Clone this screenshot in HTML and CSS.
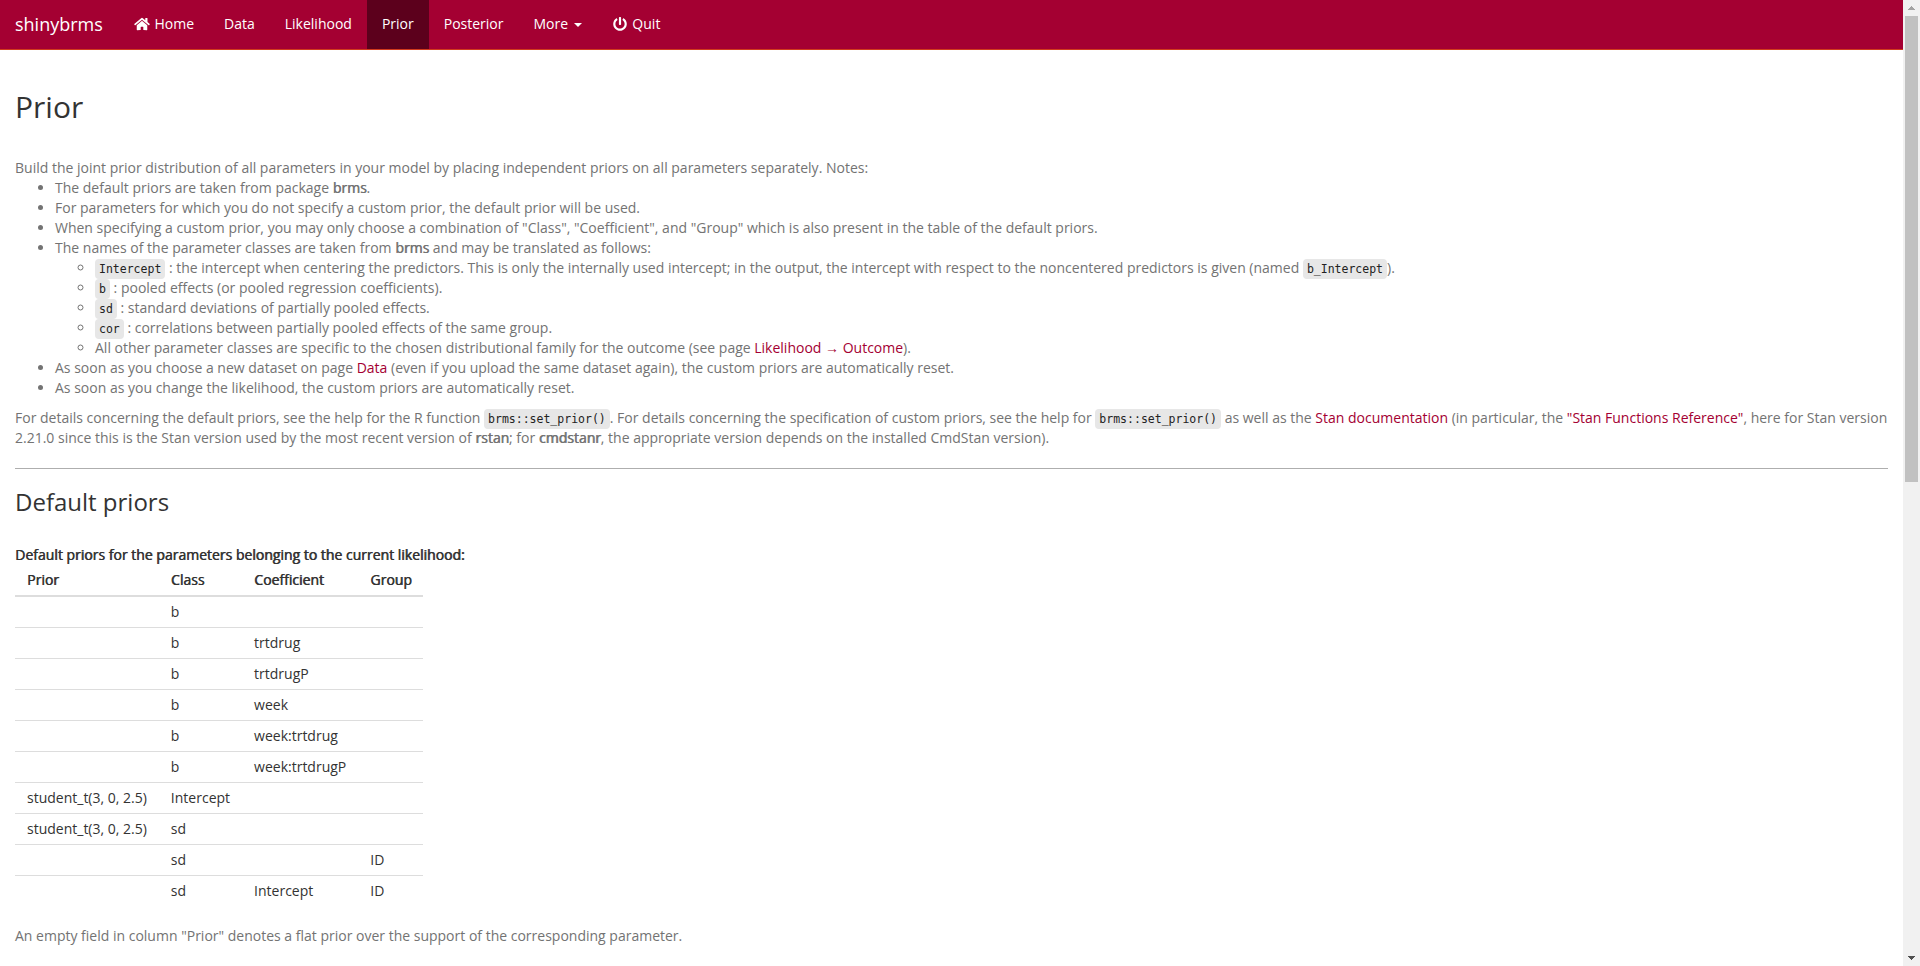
FILE: index.html
```
<!DOCTYPE html>
<html lang="en">
<head>
<meta charset="utf-8">
<title>shinybrms</title>
<link rel="stylesheet" href="styles.css">
</head>
<body>
<div class="page">
  <nav class="navbar">
    <a class="brand">shinybrms</a>
    <a class="nav-item"><svg class="icon icon-home" viewBox="0 0 576 512"><path d="M280.37 148.26L96 300.11V464a16 16 0 0 0 16 16l112.06-.29a16 16 0 0 0 15.92-16V368a16 16 0 0 1 16-16h64a16 16 0 0 1 16 16v95.64a16 16 0 0 0 16 16.05L464 480a16 16 0 0 0 16-16V300L295.67 148.26a12.19 12.19 0 0 0-15.3 0zM571.6 251.47L488 182.56V44.05a12 12 0 0 0-12-12h-56a12 12 0 0 0-12 12v72.61L318.47 43a48 48 0 0 0-61 0L4.34 251.47a12 12 0 0 0-1.6 16.9l25.5 31A12 12 0 0 0 45.15 301l235.22-193.74a12.19 12.19 0 0 1 15.3 0L530.9 301a12 12 0 0 0 16.9-1.6l25.5-31a12 12 0 0 0-1.7-16.93z"/></svg> Home</a>
    <a class="nav-item">Data</a>
    <a class="nav-item">Likelihood</a>
    <a class="nav-item active">Prior</a>
    <a class="nav-item">Posterior</a>
    <a class="nav-item">More <span class="caret"></span></a>
    <a class="nav-item"><svg class="icon icon-power" viewBox="0 0 512 512"><path d="M400 54.1c63 45 104 118.600 104 201.900 0 136.800-110.800 247.700-247.500 248C120 504.300 8.200 393 8 256.400 7.900 173.100 48.900 99.300 111.800 54.200c11.700-8.300 28-4.800 35 7.700L162.600 90c5.900 10.500 3.100 23.800-6.600 31-41.500 30.800-68 79.600-68 134.900-.1 92.300 74.500 168.100 168 168.100 91.600 0 168.600-74.200 168-169.100-.3-51.800-24.700-101.800-68.100-134-9.700-7.200-12.400-20.500-6.500-30.900l15.800-28.100c7-12.400 23.200-16.100 34.800-7.800zM296 264V24c0-13.300-10.700-24-24-24h-32c-13.300 0-24 10.700-24 24v240c0 13.300 10.700 24 24 24h32c13.300 0 24-10.700 24-24z"/></svg> Quit</a>
  </nav>
  <main class="content">
    <h1 class="title">Prior</h1>
    <div class="help">
      Build the joint prior distribution of all parameters in your model by placing independent priors on all parameters separately. Notes:
      <ul class="notes">
        <li>The default priors are taken from package <b>brms</b>.</li>
        <li>For parameters for which you do not specify a custom prior, the default prior will be used.</li>
        <li>When specifying a custom prior, you may only choose a combination of "Class", "Coefficient", and "Group" which is also present in the table of the default priors.</li>
        <li>The names of the parameter classes are taken from <b>brms</b> and may be translated as follows:
          <ul class="classes">
            <li><code>Intercept</code> : the intercept when centering the predictors. This is only the internally used intercept; in the output, the intercept with respect to the noncentered predictors is given (named <code>b_Intercept</code>).</li>
            <li><code>b</code> : pooled effects (or pooled regression coefficients).</li>
            <li><code>sd</code> : standard deviations of partially pooled effects.</li>
            <li><code>cor</code> : correlations between partially pooled effects of the same group.</li>
            <li>All other parameter classes are specific to the chosen distributional family for the outcome (see page <a class="link">Likelihood <span class="arrow">→</span> Outcome</a>).</li>
          </ul>
        </li>
        <li>As soon as you choose a new dataset on page <a class="link">Data</a> (even if you upload the same dataset again), the custom priors are automatically reset.</li>
        <li>As soon as you change the likelihood, the custom priors are automatically reset.</li>
      </ul>
      <p class="details">For details concerning the default priors, see the help for the R function <code>brms::set_prior()</code>. For details concerning the specification of custom priors, see the help for <code>brms::set_prior()</code> as well as the <a class="link">Stan documentation</a> (in particular, the <a class="link">"Stan Functions Reference"</a>, here for Stan version 2.21.0 since this is the Stan version used by the most recent version of <b>rstan</b>; for <b>cmdstanr</b>, the appropriate version depends on the installed CmdStan version).</p>
    </div>
    <hr class="rule">
    <h2 class="subtitle">Default priors</h2>
    <div class="table-label">Default priors for the parameters belonging to the current likelihood:</div>
    <table class="priors">
      <thead><tr><th>Prior</th><th>Class</th><th>Coefficient</th><th>Group</th></tr></thead>
      <tbody>
        <tr><td></td><td>b</td><td></td><td></td></tr>
        <tr><td></td><td>b</td><td>trtdrug</td><td></td></tr>
        <tr><td></td><td>b</td><td>trtdrugP</td><td></td></tr>
        <tr><td></td><td>b</td><td>week</td><td></td></tr>
        <tr><td></td><td>b</td><td>week:trtdrug</td><td></td></tr>
        <tr><td></td><td>b</td><td>week:trtdrugP</td><td></td></tr>
        <tr><td>student_t(3, 0, 2.5)</td><td>Intercept</td><td></td><td></td></tr>
        <tr><td>student_t(3, 0, 2.5)</td><td>sd</td><td></td><td></td></tr>
        <tr><td></td><td>sd</td><td></td><td>ID</td></tr>
        <tr><td></td><td>sd</td><td>Intercept</td><td>ID</td></tr>
      </tbody>
    </table>
    <p class="footnote">An empty field in column "Prior" denotes a flat prior over the support of the corresponding parameter.</p>
  </main>
</div>
<div class="scrollbar">
  <svg class="sb-arrow" viewBox="0 0 17 16"><path d="M8 6h1v1h1v1h1v1h1v1H5V9h1V8h1V7h1z" fill="#a3a3a3"/></svg>
  <div class="sb-thumb"></div>
  <svg class="sb-arrow sb-down" viewBox="0 0 17 16"><path d="M5 6h7v1h-1v1h-1v1H9v1H8V9H7V8H6V7H5z" fill="#505050"/></svg>
</div>
</body>
</html>
```
FILE: styles.css
```
* { box-sizing: border-box; }
body {
  margin: 0;
  height: 966px;
  overflow: hidden;
  display: flex;
  background: #fff;
  color: #333;
  font: 14px/20px "Open Sans", sans-serif;
}
.page { flex: 1; min-width: 0; }
.navbar {
  height: 50px;
  display: flex;
  background: #a40032;
  border-bottom: 1px solid #d13b1c;
  color: #fff;
}
.brand { padding: 14px 15px; font-size: 18px; }
.nav-item { padding: 14px 15px; white-space: pre; }
.nav-item.active { background: #5c001c; }
.icon { fill: currentColor; height: 14px; vertical-align: -2px; }
.icon-home { width: 16px; margin: 0 1px; }
.icon-power { width: 14px; margin: 0 2px 0 1px; }
.caret {
  display: inline-block;
  margin-left: 2px;
  vertical-align: middle;
  border-top: 4px solid;
  border-left: 4px solid transparent;
  border-right: 4px solid transparent;
}
.content { padding: 0 15px; }
.title {
  margin: 40px 0 35px;
  font-size: 30px;
  line-height: 33px;
  font-weight: 400;
}
.help, .footnote { color: #737373; }
.notes, .classes { margin: 0; padding-left: 40px; }
b, th, .table-label { font-weight: 400; text-shadow: 0.6px 0 currentColor; }
code {
  padding: 3px 4px;
  border-radius: 4px;
  background: #e7e7e7;
  color: #222;
  font: 11.5px "DejaVu Sans Mono", monospace;
}
.link { color: #a40032; }
.arrow { font: 14px/1 "Liberation Serif", serif; }
.details { margin: 10px 0 0; }
.rule { margin: 20px 0; border: 0; border-top: 1px solid #aeaeae; }
.subtitle {
  margin: 0 0 30px;
  font-size: 24px;
  line-height: 26px;
  font-weight: 400;
}
.priors { border-collapse: collapse; }
.priors th, .priors td { height: 31px; padding: 5px 12px; text-align: left; }
.priors th { border-bottom: 2px solid #ddd; }
.priors th:last-child { padding-right: 11px; }
.priors tbody tr + tr td { border-top: 1px solid #ddd; }
.footnote { margin: 19px 0 0; }
.scrollbar {
  width: 17px;
  display: flex;
  flex-direction: column;
  background: #f1f1f1;
}
.sb-arrow { width: 17px; height: 16px; }
.sb-thumb { height: 466px; margin: 0 2px; background: #c1c1c1; }
.sb-down { margin-top: auto; }
```
